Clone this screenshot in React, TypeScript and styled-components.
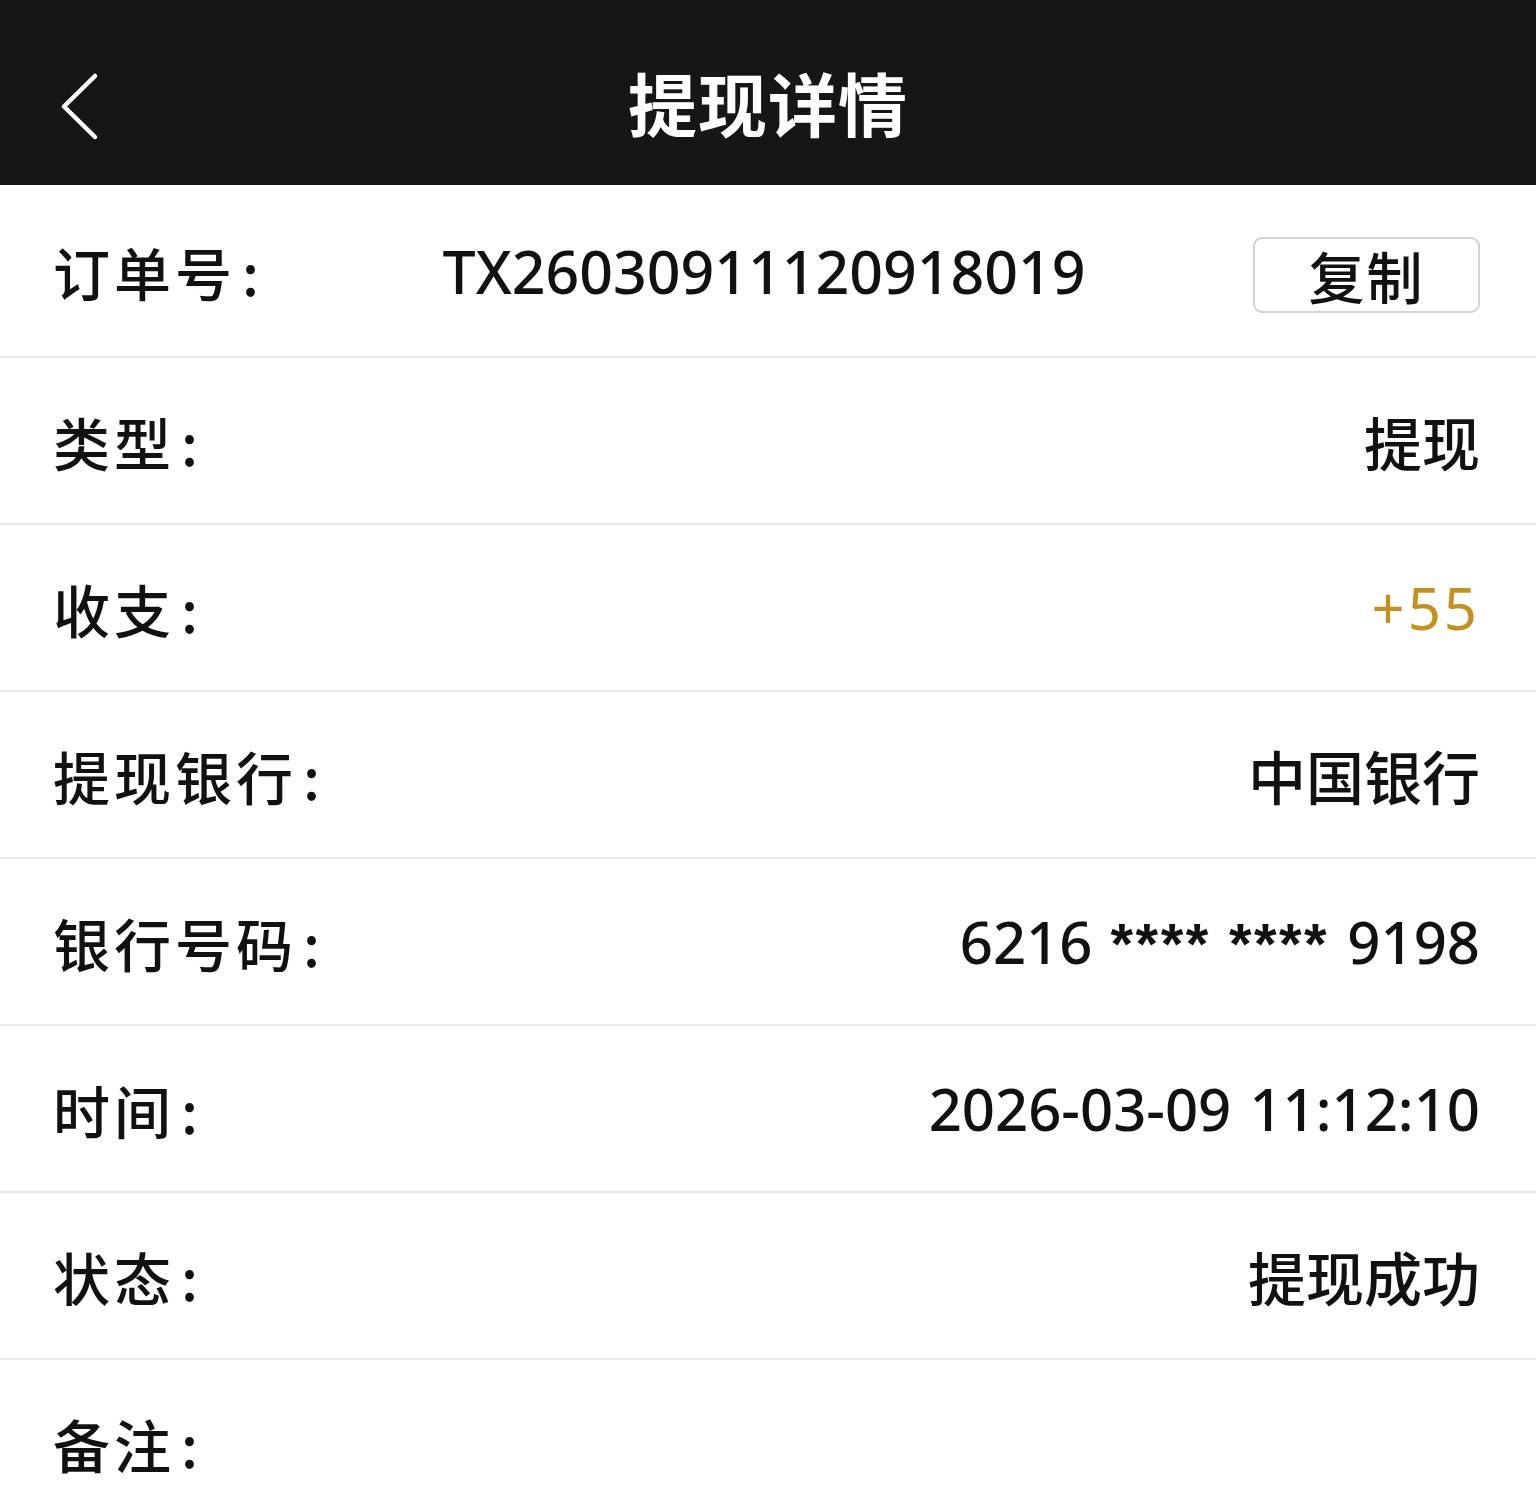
import React from "react";
import styled, { createGlobalStyle } from "styled-components";

const ROWS = [
  { label: "类型", value: "提现" },
  { label: "收支", value: "+55", tone: "gold" },
  { label: "提现银行", value: "中国银行" },
  { label: "银行号码", value: "card" },
  { label: "时间", value: "2026-03-09 11:12:10" },
  { label: "状态", value: "提现成功" },
  { label: "备注", value: "" },
];

const GlobalStyle = createGlobalStyle`
  html, body {
    margin: 0;
    padding: 0;
    background: #fff;
  }
  body {
    font-family: "Noto Sans", "Noto Sans CJK SC", sans-serif;
    color: #111;
  }
`;

export default function App() {
  const rows = ROWS.map((item, i) => {
    const value =
      item.value === "card" ? (
        <>
          6216 <Mask>****</Mask> <Mask>****</Mask> 9198
        </>
      ) : (
        item.value
      );
    return (
      <Row key={i}>
        <Label>
          {item.label}
          <Colon>:</Colon>
        </Label>
        <Value $gold={item.tone === "gold"}>{value}</Value>
      </Row>
    );
  });

  return (
    <Page>
      <GlobalStyle />
      <Header>
        <BackButton aria-label="返回">
          <svg width="44" height="70" viewBox="0 0 44 70" fill="none">
            <path
              d="M37 4 L6 34.5 L37 65"
              stroke="#fff"
              strokeWidth="4.5"
              strokeLinecap="round"
              strokeLinejoin="round"
            />
          </svg>
        </BackButton>
        <Title>提现详情</Title>
      </Header>

      <List>
        <OrderRow>
          <Label>
            订单号<Colon>:</Colon>
          </Label>
          <OrderNo>TX26030911120918019</OrderNo>
          <CopyButton>复制</CopyButton>
        </OrderRow>
        {rows}
      </List>
    </Page>
  );
}

const Page = styled.div`
  width: 1536px;
  min-height: 1501px;
  background: #fff;
  overflow: hidden;
`;

const Header = styled.header`
  position: relative;
  height: 185px;
  background: #161616;
  display: flex;
  align-items: center;
  justify-content: center;
`;

const BackButton = styled.div`
  position: absolute;
  left: 58px;
  top: 72px;
  width: 44px;
  height: 70px;
  display: flex;
`;

const Title = styled.h1`
  margin: 18px 0 0 0;
  font-family: "Noto Sans CJK SC", sans-serif;
  font-size: 69px;
  font-weight: 700;
  color: #fff;
  letter-spacing: 1px;
`;

const List = styled.div`
  display: flex;
  flex-direction: column;
`;

const Row = styled.div`
  height: 165px;
  border-bottom: 2px solid #e7e7e7;
  display: flex;
  align-items: center;
  justify-content: space-between;
  padding: 0 56px 0 53px;
`;

const OrderRow = styled(Row)`
  height: 171px;
`;

const Label = styled.div`
  font-family: "Noto Sans CJK SC", sans-serif;
  font-size: 57px;
  font-weight: 500;
  letter-spacing: 4px;
  white-space: nowrap;
`;

const Colon = styled.span`
  margin-left: 6px;
`;

const Value = styled.div<{ $gold?: boolean }>`
  font-family: "Noto Sans", "Noto Sans CJK SC", sans-serif;
  font-size: 58px;
  font-weight: ${(p) => (p.$gold ? 400 : 500)};
  white-space: nowrap;
  color: ${(p) => (p.$gold ? "#c4911f" : "#111")};
  letter-spacing: ${(p) => (p.$gold ? "3px" : "0")};
  word-spacing: 3px;
`;

const Mask = styled.span`
  font-family: "Liberation Sans", sans-serif;
  font-size: 58px;
  font-weight: 700;
  letter-spacing: 2.5px;
`;

const OrderNo = styled.div`
  flex: 1;
  text-align: center;
  font-family: "Noto Sans", sans-serif;
  font-size: 59px;
  font-weight: 500;
  padding-left: 12px;
`;

const CopyButton = styled.div`
  width: 223px;
  height: 72px;
  border: 2px solid #d2d2d2;
  border-radius: 9px;
  display: flex;
  align-items: center;
  justify-content: center;
  font-family: "Noto Sans CJK SC", sans-serif;
  font-size: 56px;
  font-weight: 500;
  letter-spacing: 2px;
  margin-top: 8px;
`;
